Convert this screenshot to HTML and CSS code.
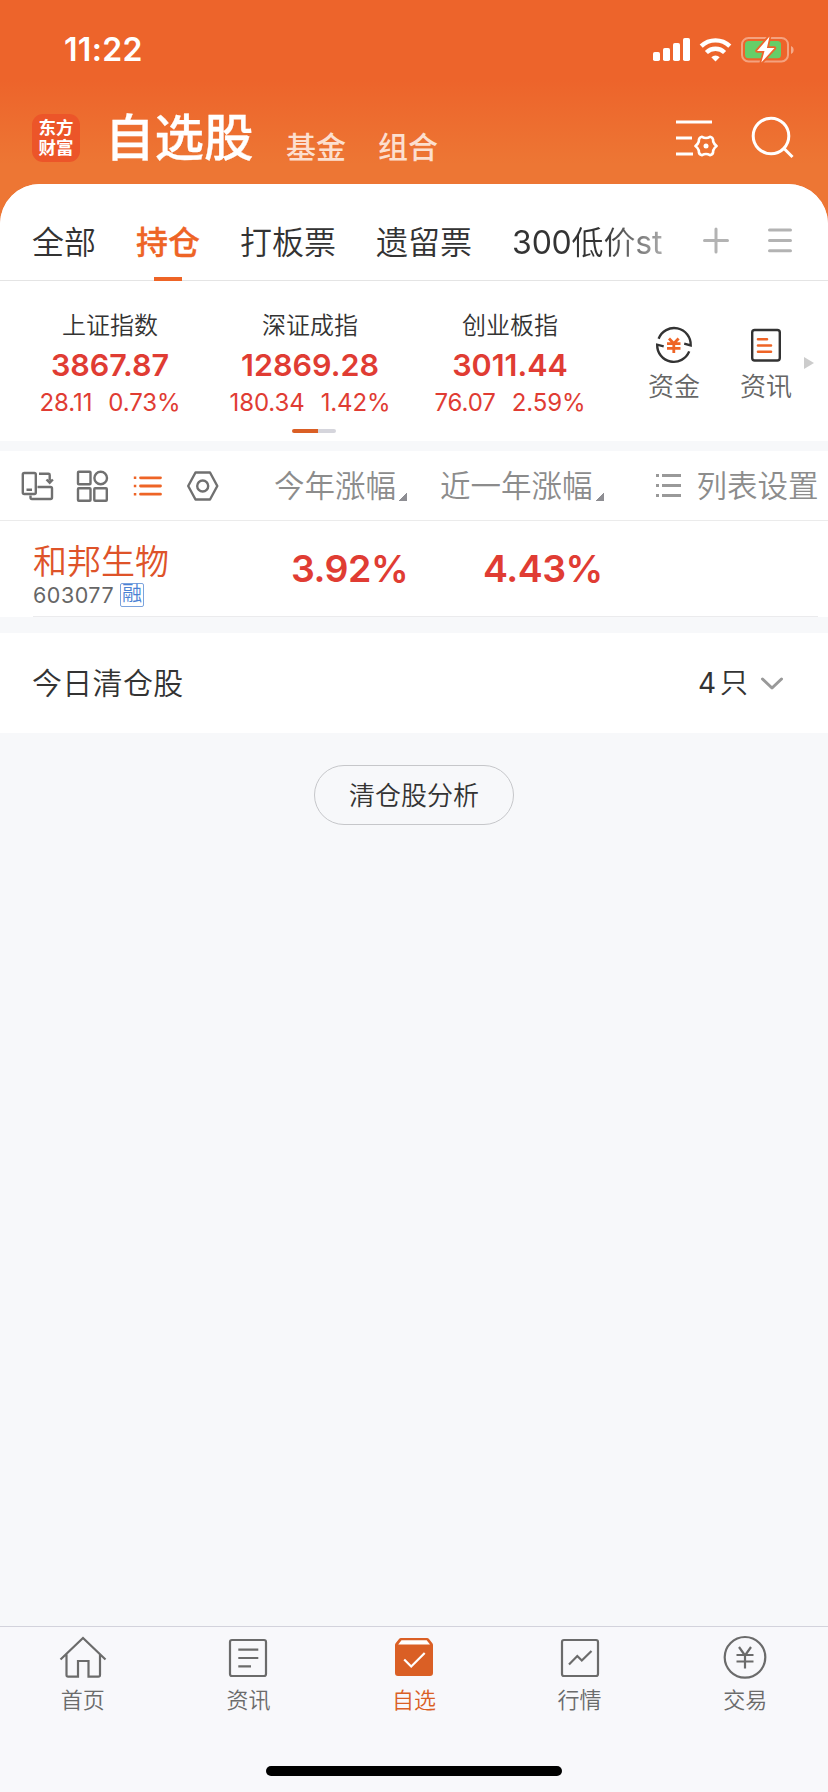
FILE: index.html
```html
<!DOCTYPE html>
<html lang="zh-CN">
<head>
<meta charset="utf-8">
<title>自选股</title>
<link rel="stylesheet" href="styles.css">
</head>
<body>
<div class="app">
  <header class="header">
    <div class="status">
      <span class="time">11:22</span>
      <svg class="status-icons" width="144" height="30" viewBox="652 35 144 30">
        <g fill="#fff">
          <rect x="653" y="52" width="7" height="9" rx="1.8"/>
          <rect x="663" y="48" width="7" height="13" rx="1.8"/>
          <rect x="673" y="43" width="7" height="18" rx="1.8"/>
          <rect x="683" y="38" width="7" height="23" rx="1.8"/>
          <path d="M711.3 57.2a6.3 6.3 0 0 1 8.400 0l-4.200 4.200z"/>
        </g>
        <path d="M701.200 46.200a20.500 20.500 0 0 1 28.600 0M706.400 52.500a13 13 0 0 1 18.200 0" fill="none" stroke="#fff" stroke-width="4.400"/>
        <rect x="742" y="38" width="46" height="23.400" rx="6.500" fill="none" stroke="#fff" stroke-opacity=".4" stroke-width="2"/>
        <path d="M791 46v8c3.500-1.200 3.500-6.800 0-8z" fill="#fff" fill-opacity=".45"/>
        <rect x="745" y="41" width="36" height="17.300" rx="3.500" fill="#66ce68"/>
        <path d="M769.500 36.500L757 51h7.500l-3.200 11.500L774.500 48h-7.600z" fill="#fff" stroke="#ed652b" stroke-width="3.500" stroke-linejoin="round" paint-order="stroke"/>
      </svg>
    </div>
    <div class="nav">
      <div class="logo"><span>东方</span><span>财富</span></div>
      <h1 class="nav-title">自选股</h1>
      <span class="nav-link">基金</span>
      <span class="nav-link">组合</span>
      <svg class="nav-icons" width="126" height="46" viewBox="672 114 126 46" fill="none" stroke="#fff" stroke-width="3">
        <path d="M676 122h36M676 138h16M676 154h17"/>
        <path d="M702 136.800q4 2.400 8 0q3.400 .6 3.200 4.700q.8 2.600 3.400 4.500q-2.600 1.900-3.400 4.500q.2 4.100-3.200 4.700q-4-2.400-8 0q-3.400-.6-3.200-4.700q-.8-2.600-3.400-4.500q2.600-1.900 3.400-4.500q-.2-4.100 3.200-4.700z" stroke-width="2.600" stroke-linejoin="round"/>
        <circle cx="706" cy="146" r="2.500" fill="#fff" stroke="none"/>
        <circle cx="771" cy="136" r="17.800"/>
        <path d="M784 148.500l8.500 8.500"/>
      </svg>
    </div>
  </header>

  <main class="panel">
    <nav class="tabs">
      <span class="tab">全部</span>
      <span class="tab tab-on">持仓</span>
      <span class="tab">打板票</span>
      <span class="tab">遗留票</span>
      <span class="tab tab-fade"><i>300</i>低价<i>st</i></span>
      <svg class="tab-tools" width="94" height="30" viewBox="702 226 94 30" fill="none" stroke="#b3b3b3" stroke-width="3" stroke-linecap="round">
        <path d="M704.500 240.500h23M716 229v23M769.500 230h21M769.500 240.500h21M769.500 250.700h21"/>
      </svg>
    </nav>

    <section class="indices">
      <div class="index"><span class="index-name">上证指数</span><b class="index-value">3867.87</b><span class="index-diff"><i>28.11</i><i>0.73%</i></span></div>
      <div class="index"><span class="index-name">深证成指</span><b class="index-value">12869.28</b><span class="index-diff"><i>180.34</i><i>1.42%</i></span></div>
      <div class="index"><span class="index-name">创业板指</span><b class="index-value">3011.44</b><span class="index-diff"><i>76.07</i><i>2.59%</i></span></div>
      <div class="quick quick-fund">
        <svg width="40" height="40" viewBox="654 325 40 40" fill="none" stroke="#333" stroke-width="2.400">
          <path d="M658.600 338.800a16.600 16.600 0 0 1 32.100 6.700l-6.500-1.800M689.200 351.400a16.600 16.600 0 0 1-32-6.700l6.500 1.600"/>
          <path d="M669 338.500l4.800 5 4.800-5M667 343.700h13.500M667 348.300h13.500M673.800 343.500v9.500" stroke="#ee6426" stroke-width="2.800"/>
        </svg>
        <span>资金</span>
      </div>
      <div class="quick">
        <svg width="40" height="40" viewBox="746 325 40 40" fill="none" stroke="#333" stroke-width="2.400">
          <rect x="752.200" y="330" width="27.600" height="30.500" rx="2.500"/>
          <path d="M758 339.200h9M758 345.500h13M758 351.800h13" stroke="#ee6426" stroke-width="2.600" stroke-linecap="round"/>
        </svg>
        <span>资讯</span>
      </div>
      <svg class="more" width="10" height="12" viewBox="0 0 10 12"><path d="M0 0l10 6-10 6z" fill="#ccc"/></svg>
      <div class="pager"></div>
    </section>

    <section class="toolbar">
      <svg class="view-icons" width="200" height="36" viewBox="20 468 200 36" fill="none" stroke="#707070" stroke-width="2.400">
        <rect x="22.800" y="473" width="13" height="21" rx="1.500"/>
        <path d="M26.500 489.800h5.500M39 473.800h9.500q1.200 0 1.200 1.200v5.500M46.500 479.500l3.200 3.200 3.200-3.200M37.500 487h13q1.500 0 1.500 1.500v9q0 1.500-1.500 1.500h-18.500q-1.500 0-1.500-1.500v-2"/>
        <rect x="78" y="471.800" width="12.500" height="12.500" rx=".8"/>
        <circle cx="100.700" cy="478" r="6.300"/>
        <rect x="78" y="488.200" width="12.500" height="12.500" rx=".8"/>
        <rect x="94.300" y="488.200" width="12.500" height="12.500" rx=".8"/>
        <path d="M140.500 477.800h20M140.500 486h20M140.500 494.200h20" stroke="#ee6426" stroke-width="2.800" stroke-linecap="round"/>
        <path d="M133.800 477.800h2.500M133.800 486h2.500M133.800 494.200h2.500" stroke="#ee6426" stroke-width="2.600"/>
        <path d="M195.500 472.500h14.500l7.300 13.500-7.300 13.500h-14.500l-7.300-13.500z" stroke-linejoin="round"/>
        <circle cx="202.700" cy="486" r="5.500"/>
      </svg>
      <span class="sort sort-year">今年涨幅<i></i></span>
      <span class="sort sort-last">近一年涨幅<i></i></span>
      <span class="setup">
        <svg width="26" height="26" viewBox="0 0 26 26" stroke="#999" stroke-width="2.800"><path d="M0 2.500h3M6 2.500h19M0 12.500h3M6 12.500h19M0 22.500h3M6 22.500h19"/></svg>
        列表设置
      </span>
    </section>

    <section class="stock">
      <div class="stock-id">
        <span class="stock-name">和邦生物</span>
        <span class="stock-code">603077<em>融</em></span>
      </div>
      <b class="gain gain-year">3.92%</b>
      <b class="gain">4.43%</b>
    </section>

    <section class="cleared">
      <span class="cleared-title">今日清仓股</span>
      <span class="cleared-count"><i>4</i><span>只</span></span>
      <svg width="24" height="16" viewBox="0 0 24 16" fill="none" stroke="#999" stroke-width="3" stroke-linecap="round" stroke-linejoin="round"><path d="M2.500 4l9.500 9 9.500-9"/></svg>
    </section>
    <button class="analyse">清仓股分析</button>
  </main>

  <footer class="tabbar">
    <div class="tabbar-items">
      <div class="item">
        <svg width="48" height="46" viewBox="59 1634 48 46" fill="none" stroke="#6b6b6b" stroke-width="2.200"><path d="M60.500 1659.500l22.500-21.500 22.500 21.500M66.500 1654.500v20.500q0 1.700 1.700 1.700h9.800v-15.700h10.500v15.700h9.800q1.700 0 1.700-1.700v-20.500"/></svg>
        <span>首页</span>
      </div>
      <div class="item">
        <svg width="48" height="46" viewBox="225 1634 48 46" fill="none" stroke="#6b6b6b" stroke-width="2.200"><rect x="231" y="1640" width="36" height="36" rx="2"/><path d="M239.300 1649.600h20M239.300 1658h20M239.300 1666.400h12.700"/></svg>
        <span>资讯</span>
      </div>
      <div class="item item-on">
        <svg width="48" height="46" viewBox="389 1634 48 46"><path d="M400 1638h26q1.300 0 2 1l3.200 4q.8 1 .8 2v28q0 3-3 3h-32q-3 0-3-3v-28q0-1 .8-2l3.200-4q.7-1 2-1z" fill="#da5f25"/><path d="M400.500 1640.300h25.200l3.300 4.200h-31.800z" fill="#fff"/><path d="M403.200 1659.500l7 7 13.500-13.500" fill="none" stroke="#fff" stroke-width="2.200"/></svg>
        <span>自选</span>
      </div>
      <div class="item">
        <svg width="48" height="46" viewBox="556 1634 48 46" fill="none" stroke="#6b6b6b" stroke-width="2.200"><rect x="562" y="1640" width="36" height="36" rx="2"/><path d="M569 1664.500l8.300-8.500 4.500 4.500 9.700-9.500"/></svg>
        <span>行情</span>
      </div>
      <div class="item">
        <svg width="48" height="46" viewBox="720.500 1634 48 46" fill="none" stroke="#6b6b6b" stroke-width="2.200"><circle cx="744.500" cy="1657.300" r="20.300"/><path d="M738.500 1647l6 8.500 6-8.500M736 1655h17M736 1661.500h17M744.500 1655v13.500"/></svg>
        <span>交易</span>
      </div>
    </div>
    <div class="home-bar"></div>
  </footer>
</div>
</body>
</html>
```
FILE: styles.css
```css
* { box-sizing: border-box; }
body { margin: 0; background: #f7f8fa; }
i, em { font-style: normal; }
i { font-weight: 400; }
svg { display: block; flex: none; }

.app {
  width: 828px;
  height: 1792px;
  display: flex;
  flex-direction: column;
  overflow: hidden;
  font-family: Inter, "Noto Sans CJK SC", sans-serif;
  font-weight: 350;
  color: #333;
  background: #f7f8fa;
  white-space: nowrap;
}

.header {
  height: 224px;
  margin-bottom: -40px;
  flex: none;
  background: linear-gradient(#ed642b 0, #ed642b 80px, #ed7634 164px);
  color: #fff;
}
.status { height: 88px; padding: 34px 32px 0 64px; display: flex; justify-content: space-between; }
.time { font-size: 32px; font-weight: 600; line-height: 31px; letter-spacing: .3px; }
.status-icons { margin-top: 1px; }
.nav { height: 96px; padding: 26px 30px 0 32px; display: flex; align-items: flex-start; }
.logo {
  width: 48px; height: 48px; padding: 4px 0 0;
  border-radius: 11px; background: #ec5529;
  font-size: 17.500px; font-weight: 700; line-height: 20px; text-align: center;
  display: flex; flex-direction: column;
}
.nav-title { margin: -3px 0 0 25px; width: 151px; font-size: 49.500px; font-weight: 500; line-height: 54px; -webkit-text-stroke: .3px #fff; }
.nav-link { margin: 15px 0 0 30px; font-size: 30px; line-height: 36px; font-weight: 500; color: #fcdfcf; }
.nav-link + .nav-link { margin-left: 32px; }
.nav-icons { margin-left: auto; }

.panel {
  flex: 1;
  display: flex;
  flex-direction: column;
  border-radius: 40px 40px 0 0;
  background: #f7f8fa;
  overflow: hidden;
}
.tabs {
  height: 97px; flex: none; padding: 0 32px 0 32px;
  display: flex; gap: 40px;
  background: #fff; border-bottom: 1px solid #e4e4e4;
  font-size: 32px; line-height: 117px;
}
.tab { height: 97px; }
.tab-on {
  color: #ee6426; font-weight: 500; -webkit-text-stroke: .3px #ee6426;
  background: linear-gradient(#ee6426, #ee6426) 50% 93px / 28px 4px no-repeat;
}
.tab-fade {
  width: 150px;
  letter-spacing: -.2px;
  color: transparent;
  background: linear-gradient(90deg, #333 0 92px, #aaa 150px);
  -webkit-background-clip: text;
  background-clip: text;
}
.tab-tools { margin: 42px 0 0 auto; }

.indices {
  height: 160px; flex: none; padding-left: 10px;
  display: flex; position: relative; background: #fff;
}
.index { width: 200px; padding-top: 29px; display: flex; flex-direction: column; align-items: center; }
.index-name { font-size: 24px; line-height: 32px; }
.index-value { margin-top: 5px; font-size: 30.500px; line-height: 36px; font-weight: 600; color: #e03c33; }
.index-diff { margin-top: 6px; display: flex; gap: 16px; font-size: 24px; line-height: 28px; color: #e03c33; letter-spacing: -.1px; }
.quick { width: 92px; padding-top: 44px; display: flex; flex-direction: column; align-items: center; font-size: 26px; line-height: 36px; color: #666; }
.quick span { margin-top: 4px; }
.quick-fund { margin-left: 18px; }
.more { margin: 76px 0 0 -8px; }
.pager {
  position: absolute; left: 292px; bottom: 8px; width: 44px; height: 4px; border-radius: 2px;
  background: linear-gradient(90deg, #da5f25 0 26px, #d5d5dc 26px);
}

.toolbar {
  height: 70px; flex: none; margin-top: 10px; padding-left: 20px;
  display: flex; background: #fff; border-bottom: 1px solid #ebebeb;
  font-size: 30.500px; line-height: 70px; color: #8c8c8c;
}
.view-icons { margin-top: 17px; }
.sort { display: flex; }
.sort i { width: 8px; height: 8px; margin: 42px 0 0 3px; background: linear-gradient(135deg, transparent 50%, #8e8e93 50%); }
.sort-year { margin-left: 54px; }
.sort-last { margin-left: 33px; }
.setup { margin-left: 52px; display: flex; gap: 15px; }
.setup svg { margin-top: 22px; }

.stock { height: 96px; flex: none; display: flex; padding-left: 33px; background: linear-gradient(90deg, #fff 33px, #ebebed 33px 818px, #fff 818px) 0 95px / 100% 1px no-repeat #fff; }
.stock-id { width: 258px; display: flex; flex-direction: column; }
.stock-name { margin-top: 17px; font-size: 34px; line-height: 48px; color: #de5329; }
.stock-code { margin-top: -4px; display: flex; align-items: center; font-size: 21.500px; line-height: 26px; font-weight: 400; color: #666; letter-spacing: .5px; }
.stock-code em {
  width: 24px; height: 24px; margin-left: 6px;
  border: 1px solid #7ba3de; border-radius: 2px;
  font-size: 20px; line-height: 21px; font-weight: 350; text-align: center; color: #4a82d4; letter-spacing: 0;
}
.gain { width: 192px; padding-top: 25px; font-size: 37.500px; line-height: 46px; font-weight: 600; color: #e03c33; letter-spacing: -.5px; }

.cleared {
  height: 100px; flex: none; margin-top: 16px; padding: 0 44px 0 32px;
  display: flex; align-items: center;
  background: #fff; font-size: 30px; line-height: 40px;
}
.cleared-title { letter-spacing: .3px; }
.cleared-count { margin-left: auto; margin-right: 12px; display: flex; gap: 4px; font-size: 28px; }

.analyse {
  width: 200px; height: 60px; flex: none; margin: 32px auto 0; padding: 0;
  border: 1px solid #c6c7ca; border-radius: 30px; background: transparent;
  font: 350 26px/57px Inter, "Noto Sans CJK SC", sans-serif; color: #333;
}

.tabbar { height: 166px; flex: none; border-top: 1px solid #d3d3dc; background: #f8f8fb; display: flex; flex-direction: column; }
.tabbar-items { height: 139px; padding-top: 7px; display: grid; grid-template-columns: repeat(5, 1fr); }
.item { display: flex; flex-direction: column; align-items: center; font-size: 22px; line-height: 30px; color: #6b6b6b; }
.item span { margin-top: 5px; }
.item-on { color: #da5f25; }
.home-bar { width: 296px; height: 10px; margin: 0 auto; border-radius: 5px; background: #000; }
```
